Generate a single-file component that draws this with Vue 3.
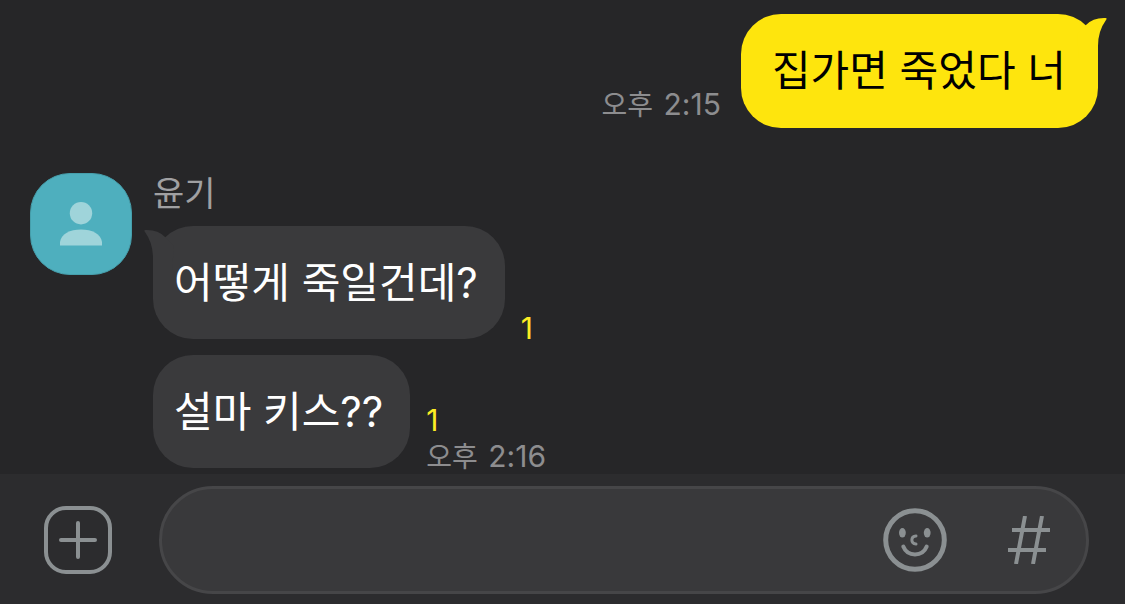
<script setup>
import { ref } from 'vue'

const draft = ref('')
const sent = [{ id: 1, text: '집가면 죽었다 너', period: '오후', time: '2:15' }]
const received = {
  name: '윤기',
  messages: [
    { id: 2, text: '어떻게 죽일건데?', unread: 1 },
    { id: 3, text: '설마 키스??', unread: 1, period: '오후', time: '2:16' },
  ],
}
</script>

<template>
  <div class="app">
    <main class="chat">
      <div v-for="m in sent" :key="m.id" class="row mine">
        <div class="meta">
          <time><span class="period">{{ m.period }}</span> {{ m.time }}</time>
        </div>
        <div class="bubble">
          <svg class="tail" width="40" height="44" viewBox="0 0 40 44" aria-hidden="true">
            <path d="M10 20L19 11Q26 3.500 38.500 4Q40.500 4 39 6Q31 17 31 32V44H12Z" />
          </svg>
          {{ m.text }}
        </div>
      </div>

      <section class="group">
        <div class="avatar">
          <svg width="42" height="44" viewBox="0 0 42 44" aria-hidden="true">
            <circle cx="21" cy="11.200" r="11.200" />
            <path d="M0 43.500V40C1 32 10 27.500 21 27.500S41 32 42 40V43.500Z" />
          </svg>
        </div>
        <div class="thread">
          <h2 class="name">{{ received.name }}</h2>
          <div v-for="(m, i) in received.messages" :key="m.id" class="row theirs">
            <div class="bubble">
              <svg v-if="i === 0" class="tail" width="40" height="44" viewBox="0 0 40 44" aria-hidden="true">
                <path d="M30 20L21 11Q14 3.500 1.500 4Q-0.500 4 1 6Q9 17 9 32V44H28Z" />
              </svg>
              {{ m.text }}
            </div>
            <div class="meta">
              <span class="unread">{{ m.unread }}</span>
              <time v-if="m.time"><span class="period">{{ m.period }}</span> {{ m.time }}</time>
            </div>
          </div>
        </div>
      </section>
    </main>

    <form class="composer" @submit.prevent>
      <button class="add" type="button" aria-label="추가">
        <svg width="68" height="68" viewBox="0 0 68 68" aria-hidden="true">
          <rect x="2" y="2" width="64" height="64" rx="20" />
          <path d="M34 17V51M17 34H51" />
        </svg>
      </button>
      <div class="field">
        <input v-model="draft" type="text" aria-label="메시지" />
        <button class="emoji" type="button" aria-label="이모티콘">
          <svg width="64" height="64" viewBox="0 0 64 64" aria-hidden="true">
            <circle class="face" cx="32" cy="32" r="29.300" />
            <g class="eyes">
              <ellipse cx="19.400" cy="24.800" rx="3.400" ry="4.800" />
              <ellipse cx="44.200" cy="24.800" rx="3.400" ry="4.800" />
            </g>
            <path class="nose" d="M33 28C27.500 28.500 27.500 35.500 33 36" />
            <path d="M20.300 38.500C24.500 49 39.500 49 43.700 38.500" />
          </svg>
        </button>
        <button class="hash" type="button" aria-label="샵검색">
          <svg width="42" height="48" viewBox="0 0 42 48" aria-hidden="true">
            <path d="M17 0L8 48M34 0L25 48M4 14H42M0 34H38" />
          </svg>
        </button>
      </div>
    </form>
  </div>
</template>

<style>
body {
  margin: 0;
  background: #262628;
}
</style>

<style scoped>
.app {
  display: flex;
  flex-direction: column;
  min-height: 100vh;
  background: #262628;
  font-family: Inter, 'Noto Sans CJK KR', sans-serif;
}
.chat {
  flex: 1;
  display: flex;
  flex-direction: column;
  gap: 45px;
  padding: 14px 27px 6px 30px;
}
.row {
  display: flex;
  align-items: flex-end;
}
.mine {
  justify-content: flex-end;
  gap: 20px;
}
.theirs {
  gap: 16px;
}
.bubble {
  position: relative;
  border-radius: 40px;
  font-size: 42px;
  line-height: 57px;
}
.mine .bubble {
  padding: 28px 32px 29px 31px;
  background: #fee50d;
  color: #000;
}
.theirs .bubble {
  padding: 28px 27px 28px 21px;
  background: #3a3a3c;
  color: #fff;
}
.tail {
  position: absolute;
  top: 0;
}
.mine .tail {
  right: -9px;
  fill: #fee50d;
}
.theirs .tail {
  left: -9px;
  fill: #3a3a3c;
}
.meta {
  display: flex;
  flex-direction: column;
  color: #8d8d8f;
  font-size: 30px;
  line-height: 36px;
}
.period {
  margin-right: 2px;
  font-size: 28px;
}
.mine .meta {
  padding-bottom: 5px;
}
.theirs .meta {
  margin-bottom: -7px;
}
.unread {
  color: #fdec24;
}
.group {
  display: flex;
  align-items: flex-start;
  gap: 21px;
}
.avatar {
  display: flex;
  align-items: center;
  justify-content: center;
  box-sizing: border-box;
  width: 102px;
  height: 102px;
  border: 1px solid #469fac;
  border-radius: 40px;
  background: #4eafbe;
}
.avatar svg {
  fill: #9fd4da;
}
.thread {
  display: flex;
  flex-direction: column;
  gap: 16px;
}
.name {
  margin: 0 0 -4px;
  color: #a0a0a2;
  font-size: 34px;
  font-weight: 400;
  line-height: 41px;
}
.composer {
  display: flex;
  align-items: center;
  gap: 47px;
  padding: 12px 36px 10px 44px;
  background: #2c2c2e;
}
button {
  display: flex;
  padding: 0;
  border: 0;
  background: none;
}
button svg {
  fill: none;
  stroke: #8b9092;
  stroke-width: 4;
}
.add path {
  stroke-linecap: round;
}
.field {
  flex: 1;
  display: flex;
  align-items: center;
  box-sizing: border-box;
  height: 108px;
  padding: 0 36px 0 40px;
  border: 3px solid #464648;
  border-radius: 54px;
  background: #39393b;
}
.field input {
  flex: 1;
  min-width: 0;
  padding: 0;
  border: 0;
  outline: 0;
  background: none;
  color: #fff;
  font: inherit;
  font-size: 42px;
}
.emoji {
  margin-right: 61px;
}
.emoji path {
  stroke-linecap: round;
}
.emoji .face {
  stroke-width: 5;
}
.emoji .nose {
  stroke-width: 3;
}
.emoji .eyes {
  fill: #8b9092;
  stroke: none;
}
</style>
